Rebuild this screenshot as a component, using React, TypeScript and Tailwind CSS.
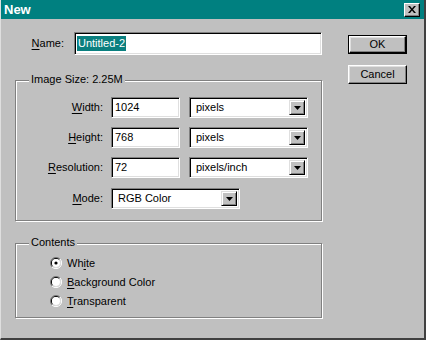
import React from "react";

const font = { fontFamily: '"Liberation Sans", Arial, sans-serif' };

function Sunken({ className = "", children }: { className?: string; children?: React.ReactNode }) {
  return (
    <div
      className={
        "border border-t-[#808080] border-l-[#808080] border-r-white border-b-white shadow-[inset_1px_1px_0_#000,inset_-1px_-1px_0_#dfdfdf] bg-white flex items-center " +
        className
      }
    >
      {children}
    </div>
  );
}

function DropBtn() {
  return (
    <div className="w-[16px] self-stretch my-[2px] mr-[2px] bg-[#c0c0c0] border border-t-[#dfdfdf] border-l-[#dfdfdf] border-r-black border-b-black shadow-[inset_1px_1px_0_#fff,inset_-1px_-1px_0_#808080] flex items-center justify-center">
      <svg width="7" height="4" viewBox="0 0 7 4">
        <path d="M0 0h7L3.5 4z" fill="#000" />
      </svg>
    </div>
  );
}

function Select({ value, className = "" }: { value: string; className?: string }) {
  return (
    <Sunken className={"h-[21px] " + className}>
      <span className="flex-1 pl-[6px] text-[11px] text-black leading-none">{value}</span>
      <DropBtn />
    </Sunken>
  );
}

function Field({ value, className = "" }: { value: string; className?: string }) {
  return (
    <Sunken className={"h-[21px] " + className}>
      <span className="pl-[3px] text-[11px] text-black leading-none">{value}</span>
    </Sunken>
  );
}

function Label({ first, rest, className = "" }: { first: string; rest: string; className?: string }) {
  return (
    <span className={"text-[11px] text-black leading-none " + className}>
      <span className="underline underline-offset-[2px]">{first}</span>
      {rest}
    </span>
  );
}

function Group({ title, className = "", children }: { title: string; className?: string; children?: React.ReactNode }) {
  return (
    <div className={"relative border border-[#808080] shadow-[1px_1px_0_#fff,inset_1px_1px_0_#fff] " + className}>
      <span className="absolute left-[13px] top-[-7px] bg-[#c0c0c0] px-[2px] text-[11px] leading-none text-black">
        {title}
      </span>
      {children}
    </div>
  );
}

function Radio({ checked }: { checked?: boolean }) {
  return (
    <svg width="12" height="12" viewBox="0 0 12 12">
      <path d="M2 10A5.5 5.5 0 0 1 10 2" stroke="#808080" fill="none" />
      <path d="M2.7 9.3A4.5 4.5 0 0 1 9.3 2.7" stroke="#000" fill="none" />
      <path d="M10 2A5.5 5.5 0 0 1 2 10" stroke="#fff" fill="none" />
      <path d="M9.3 2.7A4.5 4.5 0 0 1 2.7 9.3" stroke="#dfdfdf" fill="none" />
      <circle cx="6" cy="6" r="4" fill="#fff" />
      {checked && <circle cx="6" cy="6" r="1.6" fill="#000" />}
    </svg>
  );
}

function Button({ label, isDefault }: { label: string; isDefault?: boolean }) {
  const inner = (
    <div className="h-full w-full bg-[#c0c0c0] border border-t-white border-l-white border-r-black border-b-black shadow-[inset_-1px_-1px_0_#808080,inset_1px_1px_0_#dfdfdf] flex items-center justify-center text-[11px] text-black leading-none">
      {label}
    </div>
  );
  return (
    <div className={"w-[59px] h-[19px] " + (isDefault ? "border border-black" : "")}>{inner}</div>
  );
}

export default function App() {
  return (
    <div
      style={font}
      className="w-[426px] h-[340px] bg-[#c0c0c0] flex flex-col border-l border-l-[#dfdfdf] border-r-2 border-r-[#404040] border-b-2 border-b-[#404040] select-none"
    >
      <div className="h-[19px] bg-[#008080] flex items-center justify-between pl-[3px] pr-[4px]">
        <span className="text-white font-bold text-[13px] leading-none">New</span>
        <div className="w-[16px] h-[14px] bg-[#c0c0c0] border border-t-white border-l-white border-r-black border-b-black shadow-[inset_-1px_-1px_0_#808080] flex items-center justify-center">
          <svg width="8" height="7" viewBox="0 0 8 7">
            <path d="M0 0h2l2 2.5L6 0h2L5 3.5 8 7H6L4 4.5 2 7H0l3-3.5z" fill="#000" />
          </svg>
        </div>
      </div>

      <div className="flex flex-1">
        <div className="ml-[14px] w-[307px] flex flex-col">
          <div className="mt-[13px] flex items-center">
            <div className="w-[49px] flex justify-end">
              <Label first="N" rest="ame:" />
            </div>
            <Sunken className="ml-[10px] w-[248px] h-[23px]">
              <span className="ml-[2px] bg-[#0a7f7f] text-white text-[11px] leading-none px-[1px] py-[2px]">Untitled-2</span>
            </Sunken>
          </div>

          <Group title="Image Size:  2.25M" className="mt-[25px] h-[141px] pt-[16px]">
            <div className="flex items-center h-[21px]">
              <div className="w-[87px] flex justify-end"><Label first="W" rest="idth:" /></div>
              <Field value="1024" className="ml-[8px] w-[69px]" />
              <Select value="pixels" className="ml-[9px] w-[119px]" />
            </div>
            <div className="flex items-center h-[21px] mt-[9px]">
              <div className="w-[87px] flex justify-end"><Label first="H" rest="eight:" /></div>
              <Field value="768" className="ml-[8px] w-[69px]" />
              <Select value="pixels" className="ml-[9px] w-[119px]" />
            </div>
            <div className="flex items-center h-[21px] mt-[9px]">
              <div className="w-[87px] flex justify-end"><Label first="R" rest="esolution:" /></div>
              <Field value="72" className="ml-[8px] w-[69px]" />
              <Select value="pixels/inch" className="ml-[9px] w-[119px]" />
            </div>
            <div className="flex items-center h-[21px] mt-[10px]">
              <div className="w-[87px] flex justify-end"><Label first="M" rest="ode:" /></div>
              <Select value="RGB Color" className="ml-[8px] w-[129px]" />
            </div>
          </Group>

          <Group title="Contents" className="mt-[22px] h-[75px] pt-[13px] pl-[34px]">
            <div className="flex flex-col gap-[7px]">
              <div className="flex items-center h-[12px] gap-[5px]">
                <Radio checked />
                <span className="text-[11px] text-black leading-none">
                  Wh<span className="underline underline-offset-[2px]">i</span>te
                </span>
              </div>
              <div className="flex items-center h-[12px] gap-[5px]">
                <Radio />
                <Label first="B" rest="ackground Color" />
              </div>
              <div className="flex items-center h-[12px] gap-[5px]">
                <Radio />
                <Label first="T" rest="ransparent" />
              </div>
            </div>
          </Group>
        </div>

        <div className="ml-[26px] mt-[16px] flex flex-col gap-[11px]">
          <Button label="OK" isDefault />
          <Button label="Cancel" />
        </div>
      </div>
    </div>
  );
}
